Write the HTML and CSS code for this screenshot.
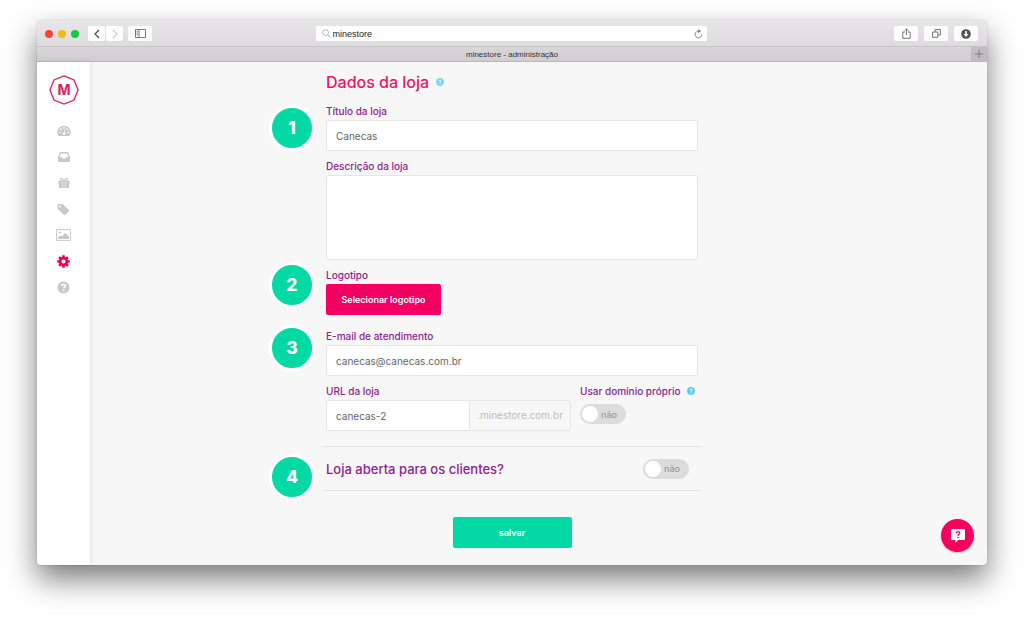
FILE: index.html
```html
<!DOCTYPE html>
<html lang="pt-BR">
<head>
<meta charset="utf-8">
<meta name="viewport" content="width=device-width, initial-scale=1">
<title>minestore - administração</title>
<link rel="stylesheet" href="styles.css">
</head>
<body>
<div class="window">
  <header class="toolbar">
    <div class="tools">
      <div class="lights"><span class="light red"></span><span class="light yellow"></span><span class="light green"></span></div>
      <div class="pair">
        <button class="tool half" type="button" aria-label="Voltar"><svg width="8" height="10" viewBox="0 0 8 10"><path d="M6 1 2 5l4 4" fill="none" stroke="#4a4a4a" stroke-width="1.2"/></svg></button>
        <button class="tool half" type="button" aria-label="Avançar"><svg width="8" height="10" viewBox="0 0 8 10"><path d="m2 1 4 4-4 4" fill="none" stroke="#cfcfcf" stroke-width="1.1"/></svg></button>
      </div>
      <button class="tool" type="button" aria-label="Barra lateral"><svg width="11" height="9" viewBox="0 0 11 9"><path d="M.5.5h10v8H.5zM4 .5v8M1.700 2.500h1.200M1.700 4h1.200M1.700 5.500h1.200" fill="none" stroke="#686868" stroke-width=".9"/></svg></button>
    </div>
    <div class="address">
      <svg width="9" height="9" viewBox="0 0 9 9"><circle cx="3.600" cy="3.600" r="2.900" fill="none" stroke="#aaa" stroke-width=".9"/><path d="m5.700 5.700 2.800 2.800" stroke="#aaa"/></svg>
      <input class="address-input" type="text" value="minestore" aria-label="Endereço">
      <button class="reload" type="button" aria-label="Recarregar"><svg width="9" height="10" viewBox="0 0 9 10"><path d="M5.200 2.100A3.400 3.400 0 1 0 7.900 5.400" fill="none" stroke="#777" stroke-width=".9"/><path d="M4 .3 7.200 2 4.300 4z" fill="#777"/></svg></button>
    </div>
    <div class="tools tools-end">
      <button class="tool" type="button" aria-label="Compartilhar"><svg width="9" height="11" viewBox="0 0 9 11"><path d="M3 4H.8v6.300h7.400V4H6M4.500 7V1M2.600 2.700 4.500.8l1.900 1.900" fill="none" stroke="#666" stroke-width=".9"/></svg></button>
      <button class="tool" type="button" aria-label="Abas"><svg width="9" height="9" viewBox="0 0 9 9"><path d="M.5 3h5.300v5.300H.5zM3 3V.6h5.400V6H5.800" fill="none" stroke="#666" stroke-width=".9"/></svg></button>
      <button class="tool" type="button" aria-label="Downloads"><svg width="10" height="10" viewBox="0 0 10 10"><circle cx="5" cy="5" r="4.800" fill="#505050"/><path d="M4.200 2h1.600v3h1.700L5 7.900 2.500 5h1.700z" fill="#fff"/></svg></button>
    </div>
  </header>
  <div class="tabs">
    <span class="tab">minestore - administração</span>
    <button class="new-tab" type="button" aria-label="Nova aba"><svg width="8" height="8" viewBox="0 0 8 8"><path d="M4 0v8M0 4h8" stroke="#777" stroke-width=".9"/></svg></button>
  </div>
  <div class="page">
    <nav class="sidebar" aria-label="Principal">
      <a class="logo" href="#" aria-label="minestore">
        <svg width="30" height="30" viewBox="0 0 30 30"><path d="M15 .9 25 5 29.100 15 25 25 15 29.100 5 25 .9 15 5 5z" fill="none" stroke="#e31867" stroke-width="1.300"/><text class="logo-letter" x="15" y="20" text-anchor="middle">M</text></svg>
      </a>
      <a class="nav-link" href="#" aria-label="Painel"><svg width="14" height="12" viewBox="0 0 14 12"><path d="M7 .8a6.500 6.500 0 0 0-5.700 9.800q.2.400.6.400h10.200q.4 0 .6-.4A6.500 6.500 0 0 0 7 .8z" fill="currentColor"/><g fill="#fff"><circle cx="2.600" cy="7.300" r=".9"/><circle cx="3.900" cy="4.200" r=".9"/><circle cx="7" cy="2.900" r=".9"/><circle cx="10.100" cy="4.200" r=".9"/><circle cx="11.400" cy="7.300" r=".9"/><circle cx="7" cy="8.700" r="1.400"/></g><path d="m7 8.500.9-3.800" stroke="#fff" stroke-width=".8"/></svg></a>
      <a class="nav-link" href="#" aria-label="Pedidos"><svg width="12" height="10" viewBox="0 0 12 10"><path fill="currentColor" fill-rule="evenodd" d="M2.500 0h7q.5 0 .7.500L12 5v4.200q0 .8-.8.800H.8Q0 10 0 9.200V5L1.800.5q.2-.5.700-.5zM3 1.500 1.600 5.200h2.500l.8 1.600h2.200l.8-1.600h2.500L9 1.500z"/></svg></a>
      <a class="nav-link" href="#" aria-label="Produtos"><svg width="12" height="12" viewBox="0 0 12 12"><path fill="currentColor" d="M.4 4h4v3.500h-4zM7.600 4h4v3.500h-4zM1.100 7.500h3.300V11H1.700q-.6 0-.6-.6zM7.600 7.500h3.300v2.900q0 .6-.6.600H7.600zM5 4h2v7H5z"/><path d="M5.600 3.800H3.400a1.300 1.300 0 1 1 1-2.200zM6.400 3.800h2.200a1.300 1.300 0 1 0-1-2.200z" fill="none" stroke="currentColor" stroke-width="1.100"/></svg></a>
      <a class="nav-link" href="#" aria-label="Etiquetas"><svg width="13" height="13" viewBox="0 0 13 13"><path fill="currentColor" fill-rule="evenodd" d="M1.500 1H5q.7 0 1.300.6l5.500 5.300q.7.700 0 1.400l-3.500 3.500q-.7.700-1.400 0L1.200 6.300Q.6 5.700.6 5V2q0-1 .9-1zM3.100 2.500a1 1 0 1 0 0 2 1 1 0 0 0 0-2z"/></svg></a>
      <a class="nav-link" href="#" aria-label="Imagens"><svg width="15" height="12" viewBox="0 0 15 12"><path d="M.6.600h13.800v10.800H.6z" fill="none" stroke="currentColor" stroke-width="1"/><circle cx="3.600" cy="3.600" r="1.200" fill="currentColor"/><path d="M2 10V8.400l2.300-2 1.400 1.200L9.200 4 13 7.600V10z" fill="currentColor"/></svg></a>
      <a class="nav-link active" href="#" aria-label="Configurações" aria-current="page"><svg width="13" height="13" viewBox="0 0 13 13"><circle cx="6.500" cy="6.500" r="3.400" fill="none" stroke="currentColor" stroke-width="2.600"/><path d="M6.500.3v2M6.500 10.700v2M.3 6.500h2M10.700 6.500h2M2.100 2.100l1.400 1.400M9.500 9.500l1.400 1.400M2.100 10.900l1.400-1.400M9.500 3.500l1.400-1.400" stroke="currentColor" stroke-width="2.500"/></svg></a>
      <a class="nav-link" href="#" aria-label="Ajuda"><svg width="13" height="13" viewBox="0 0 13 13"><circle cx="6.500" cy="6.500" r="6" fill="currentColor"/><path d="M4.600 4.900q.3-1.700 2-1.700 1.900.1 1.900 1.600 0 .9-.9 1.400-1 .5-1 1.400" fill="none" stroke="#fff" stroke-width="1.500"/><path d="M5.700 8.600h1.700v1.600H5.700z" fill="#fff"/></svg></a>
    </nav>
    <main class="content">
      <form class="form">
        <h1 class="title">Dados da loja <svg class="help" width="8" height="8" viewBox="0 0 8 8"><circle cx="4" cy="4" r="3.900" fill="#7dd3ea"/><path d="M2.800 3.100q.2-1.100 1.300-1.100 1.100.1 1.100 1 0 .5-.6.800-.5.300-.5 1" fill="none" stroke="#fff" stroke-width=".9"/><path d="M3.600 5.400h1v1h-1z" fill="#fff"/></svg></h1>
        <div class="field">
          <span class="step step-field">1</span>
          <label class="label" for="titulo">Título da loja</label>
          <input class="control" id="titulo" type="text" value="Canecas">
        </div>
        <div class="field">
          <label class="label" for="descricao">Descrição da loja</label>
          <textarea class="control area" id="descricao"></textarea>
        </div>
        <div class="field field-logo">
          <span class="step step-logo">2</span>
          <label class="label" for="logotipo">Logotipo</label>
          <button class="button pick" id="logotipo" type="button">Selecionar logotipo</button>
        </div>
        <div class="field">
          <span class="step step-email">3</span>
          <label class="label" for="email">E-mail de atendimento</label>
          <input class="control" id="email" type="email" value="canecas@canecas.com.br">
        </div>
        <div class="url-row">
          <div class="url">
            <label class="label" for="url">URL da loja</label>
            <div class="url-group"><input class="control url-input" id="url" type="text" value="canecas-2"><span class="suffix">.minestore.com.br</span></div>
          </div>
          <div class="domain">
            <label class="label" for="dominio">Usar domínio próprio <svg class="help" width="8" height="8" viewBox="0 0 8 8"><circle cx="4" cy="4" r="3.900" fill="#5ccbe8"/><path d="M2.800 3.100q.2-1.100 1.300-1.100 1.100.1 1.100 1 0 .5-.6.800-.5.300-.5 1" fill="none" stroke="#fff" stroke-width=".9"/><path d="M3.600 5.400h1v1h-1z" fill="#fff"/></svg></label>
            <label class="switch"><input class="knob" id="dominio" type="checkbox"><span>não</span></label>
          </div>
        </div>
        <div class="open-row">
          <span class="step step-open">4</span>
          <label class="open-label" for="aberta">Loja aberta para os clientes?</label>
          <label class="switch"><input class="knob" id="aberta" type="checkbox"><span>não</span></label>
        </div>
        <button class="button save" type="submit">salvar</button>
      </form>
    </main>
    <button class="chat" type="button" aria-label="Ajuda"><svg width="16" height="16" viewBox="0 0 16 16"><path d="M2.300 1h11.400q1.300 0 1.300 1.300v8.400q0 1.300-1.300 1.300H8l-2.700 3V12h-3Q1 12 1 10.700V2.300Q1 1 2.300 1z" fill="#fff"/><path d="M6.300 5.200q.1-1.600 1.700-1.600t1.700 1.400q0 .8-.8 1.300T8 7.900" fill="none" stroke="#f5005f" stroke-width="1.300"/><path d="M7.300 8.800h1.400v1.300H7.300z" fill="#f5005f"/></svg></button>
  </div>
</div>
</body>
</html>
```
FILE: styles.css
```css
* { box-sizing: border-box; }

body {
  margin: 0;
  padding: 20px 37px 52px;
  background: #fff;
  font-family: Inter, "Open Sans", sans-serif;
  font-size: 10px;
}

button, input, textarea { font: inherit; margin: 0; }
button { border: 0; padding: 0; cursor: pointer; }
svg { display: block; flex: none; }

.window {
  border-radius: 4px;
  background: #f7f7f7;
  box-shadow: 0 0 1px rgba(0, 0, 0, .4), 0 14px 30px rgba(0, 0, 0, .52);
}

/* Browser chrome */
.toolbar {
  display: grid;
  grid-template-columns: 1fr 42% 1fr;
  align-items: center;
  height: 27px;
  padding: 1px 9px 0 8px;
  border-bottom: 1px solid #c5c3c5;
  border-radius: 4px 4px 0 0;
  background: linear-gradient(#e9e6e9, #dedbde);
}
.tools { display: flex; align-items: center; gap: 5px; }
.tools-end { justify-content: flex-end; gap: 6px; }
.lights { display: flex; gap: 5px; margin-right: 4px; }
.light { width: 8px; height: 8px; border-radius: 50%; }
.red { background: #f9423f; }
.yellow { background: #f9b90f; }
.green { background: #10cd41; }
.pair { display: flex; gap: 1px; }
.tool {
  display: grid;
  place-items: center;
  width: 24px;
  height: 15px;
  border-radius: 2px;
  background: #fdfdfd;
}
.half { width: 17px; }
.address {
  display: flex;
  align-items: center;
  gap: 2px;
  height: 15px;
  padding: 0 4px 0 6px;
  border-radius: 2px;
  background: #fff;
}
.address-input {
  flex: 1;
  min-width: 0;
  padding: 0;
  border: 0;
  outline: 0;
  background: transparent;
  color: #222;
  font-family: "Liberation Sans", sans-serif;
  font-size: 9px;
}
.reload { background: transparent; }
.tabs {
  display: flex;
  height: 15px;
  border-bottom: 1px solid #b9b7b9;
  background: linear-gradient(#d8d6d8, #cfcdcf);
}
.tab {
  flex: 1;
  padding-left: 16px;
  color: #333;
  font-family: "Liberation Sans", sans-serif;
  font-size: 8px;
  line-height: 15px;
  text-align: center;
}
.new-tab { display: grid; place-items: center; width: 16px; background: #bfbdbf; }

/* Page */
.page {
  position: relative;
  display: grid;
  grid-template-columns: 53px 1fr 53px;
}
.sidebar {
  display: flex;
  flex-direction: column;
  align-items: center;
  padding-top: 13px;
  border-bottom-left-radius: 4px;
  background: #fff;
  box-shadow: 1px 0 4px rgba(0, 0, 0, .08);
}
.logo { margin-bottom: 13px; }
.logo-letter { fill: #e31867; font-size: 14px; font-weight: 700; }
.nav-link {
  display: grid;
  place-items: center;
  width: 26px;
  height: 26px;
  color: #c8c8c8;
}
.active { color: #e6005c; }

.content { padding: 10px 0 17px; }
.form { display: flex; flex-direction: column; width: 380px; max-width: 100%; margin: 0 auto; }
.title {
  display: flex;
  align-items: center;
  gap: 7px;
  margin: 0 0 12px;
  padding: 0 4px;
  color: #ec1561;
  font-size: 16px;
  font-weight: 500;
  line-height: 20px;
}
.field { position: relative; margin: 0 4px 8px; }
.field-logo { margin-bottom: 14px; }
.label {
  display: flex;
  align-items: center;
  gap: 6px;
  margin-bottom: 2px;
  color: #8d2392;
  font-weight: 500;
  line-height: 14px;
  white-space: nowrap;
}
.control {
  display: block;
  width: 100%;
  height: 31px;
  padding: 0 9px;
  border: 1px solid #e6e6e6;
  border-radius: 2px;
  background: #fff;
  color: #666;
}
.area { height: 85px; resize: none; }

.button {
  height: 31px;
  border-radius: 2px;
  color: #fff;
  font-size: 9px;
  font-weight: 600;
}
.pick { width: 115px; background: #f30062; }
.save { align-self: center; width: 119px; background: #04d9a5; }

.url-row { display: flex; gap: 9px; margin: 0 4px 15px; }
.url { flex: 0 0 245px; }
.url-group { display: flex; }
.url-input { flex: 1; min-width: 0; border-radius: 2px 0 0 2px; }
.suffix {
  flex: 0 0 101px;
  border: 1px solid #e6e6e6;
  border-left: 0;
  border-radius: 0 2px 2px 0;
  color: #bcbcbc;
  line-height: 29px;
  text-align: center;
}
.domain .label { margin-bottom: 6px; }

.switch {
  display: flex;
  align-items: center;
  gap: 3px;
  width: 46px;
  height: 20px;
  padding: 0 2px;
  border-radius: 10px;
  background: #dcdcdc;
  color: #999;
  font-size: 9px;
  font-weight: 500;
}
.switch:has(:checked) { flex-direction: row-reverse; background: #04d9a5; }
.knob {
  appearance: none;
  width: 16px;
  height: 16px;
  margin: 0;
  border-radius: 50%;
  background: #fff;
}

.open-row {
  position: relative;
  display: flex;
  align-items: center;
  justify-content: space-between;
  height: 45px;
  margin-bottom: 26px;
  padding: 0 13px 0 4px;
  border: solid #e4e4e4;
  border-width: 1px 0;
}
.open-label { color: #8d2392; font-size: 13px; font-weight: 500; }

/* Numbered markers laid over the left of the form */
.step {
  position: absolute;
  left: -57px;
  width: 46px;
  height: 46px;
  border: 3px solid #fff;
  border-radius: 50%;
  background: #04d9a5;
  color: #fff;
  font-size: 17px;
  font-weight: 800;
  line-height: 40px;
  text-align: center;
}
.step-field { top: 1px; }
.step-logo { top: -6px; }
.step-email { top: -4px; }
.step-open { top: 7px; left: -53px; }

.chat {
  position: absolute;
  right: 13px;
  bottom: 13px;
  display: grid;
  place-items: center;
  width: 33px;
  height: 33px;
  border-radius: 50%;
  background: #f5005f;
  box-shadow: 0 1px 2px rgba(0, 0, 0, .25);
}
```
